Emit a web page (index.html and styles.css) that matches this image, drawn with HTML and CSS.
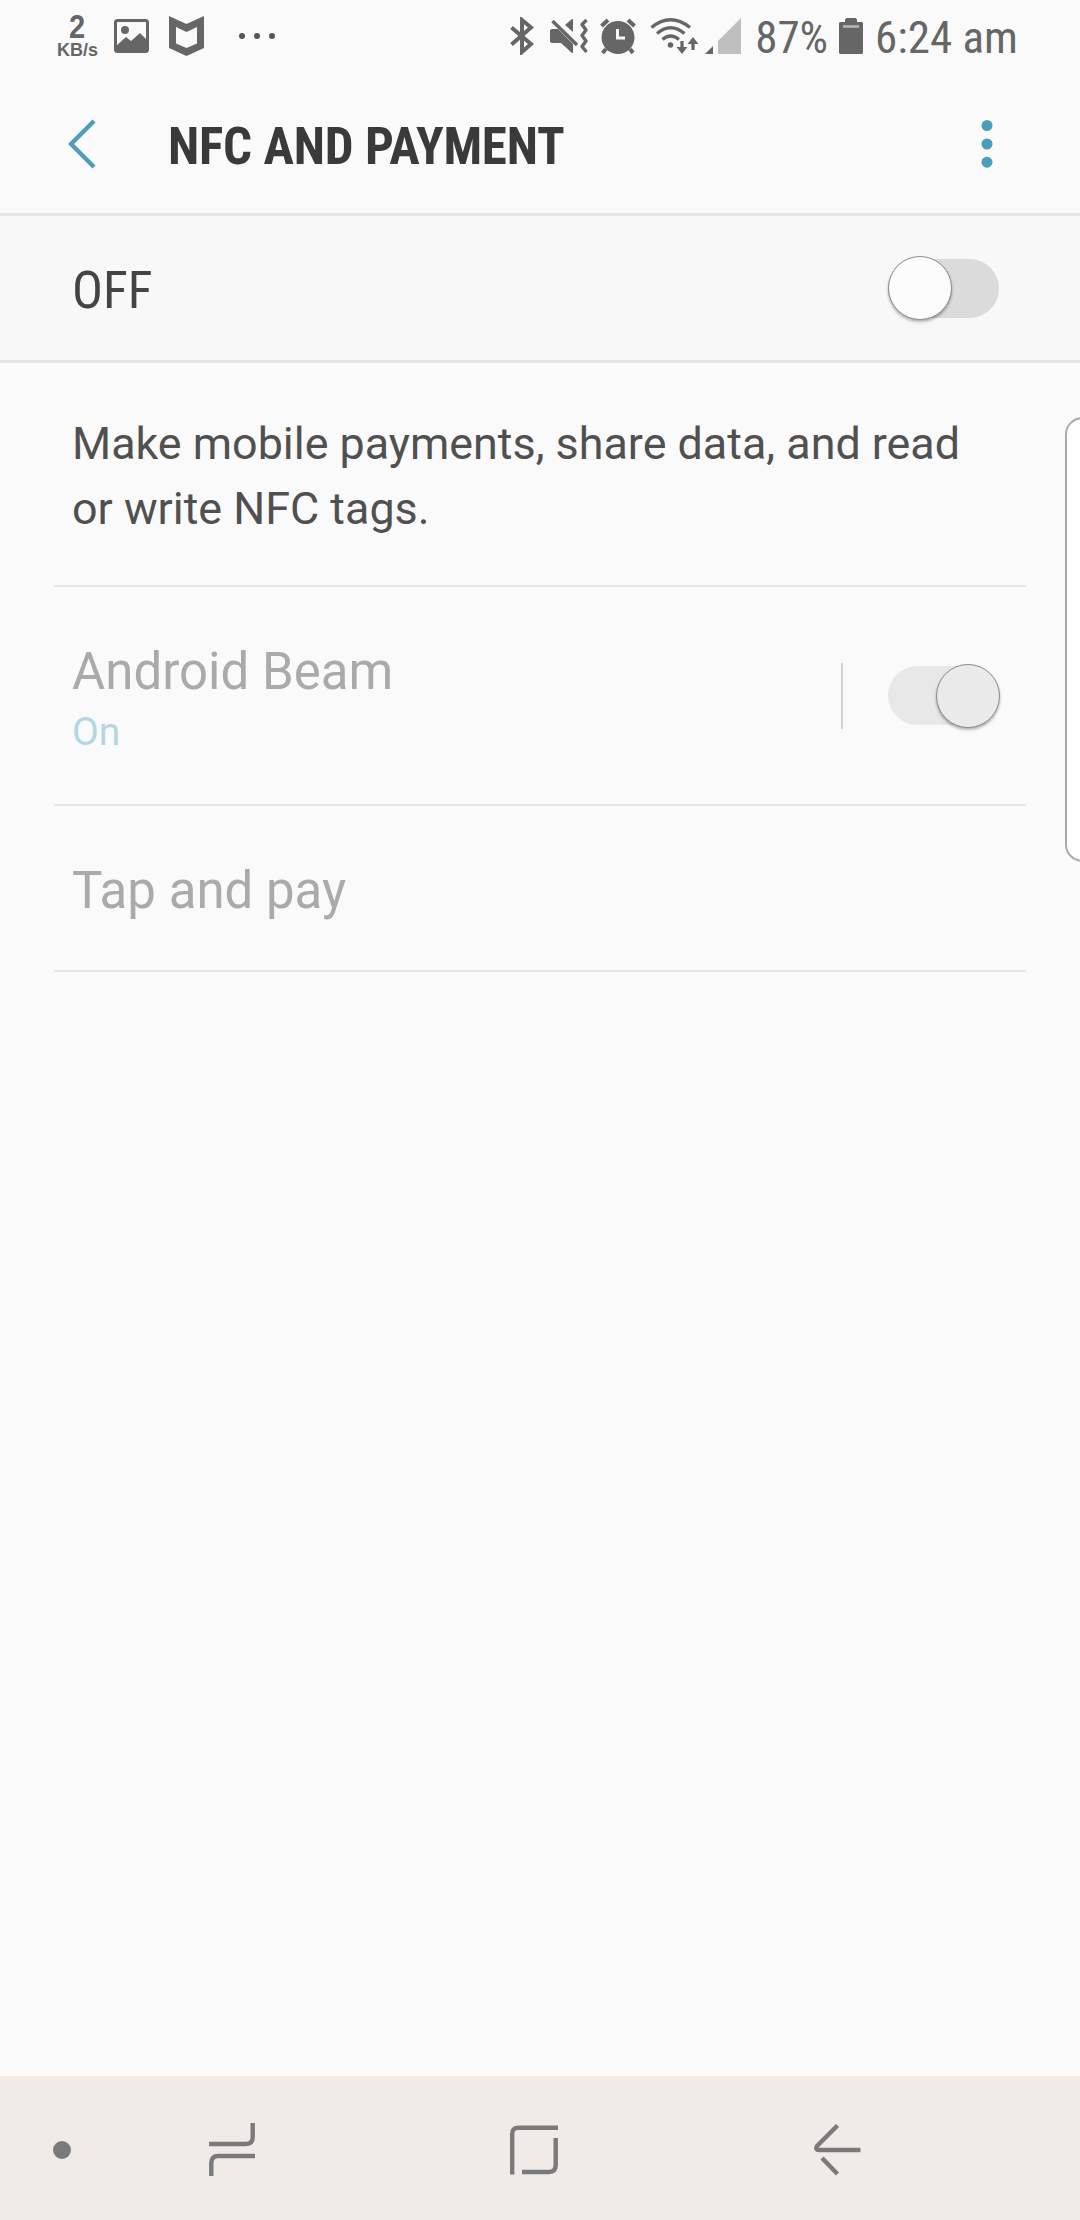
FILE: index.html
```html
<!DOCTYPE html>
<html lang="en">
<head>
    <meta charset="UTF-8">
    <meta name="viewport" content="width=device-width, initial-scale=1.0">
    <title>NFC and payment</title>
    <link rel="stylesheet" href="styles.css">
</head>
<body>
    <div class="screen">
        <div class="status-bar">
            <div class="status-left">
                <div class="speed"><span class="speed-num">2</span><span class="speed-unit">KB/s</span></div>
                <svg class="icon-picture" width="35" height="34" viewBox="0 0 35 34">
                    <rect x="1.5" y="1.5" width="32" height="31" rx="2" fill="none" stroke="#666" stroke-width="3"/>
                    <circle cx="11" cy="11" r="4" fill="#666"/>
                    <path d="M2 27 L12 18 L17 22 L26 14 L33 21 V32 H2 Z" fill="#666"/>
                </svg>
                <svg class="icon-shield" width="35" height="40" viewBox="0 0 35 40">
                    <path fill="#666" fill-rule="evenodd" d="M0 0 L17.5 8 L35 0 V32 L17.5 40 L0 32 Z M7 11 V27.5 L17.5 32 L28 27.5 V11 L17.5 16 Z"/>
                </svg>
                <svg class="icon-dots" width="36" height="6" viewBox="0 0 36 6">
                    <circle cx="3" cy="3" r="3"/><circle cx="18" cy="3" r="3"/><circle cx="33" cy="3" r="3"/>
                </svg>
            </div>
            <div class="status-right">
                <svg width="24" height="38" viewBox="0 0 24 38">
                    <path d="M1.5 10.5 L21 27 L12 35 V3 L21 10.5 L1.5 27.5" fill="none" stroke="#666" stroke-width="4"/>
                </svg>
                <svg class="icon-mute" width="39" height="38" viewBox="0 0 39 38">
                    <path d="M0 14 Q0 12 2 12 H8 L23 27 V36 H22 L11 26 H2 Q0 26 0 24 Z" fill="#666"/>
                    <path d="M15 8 L22 2 H23 V15 Z" fill="#666"/>
                    <path d="M2.5 4 L27 28" stroke="#666" stroke-width="3.4"/>
                    <path d="M36.5 2 L32 6.5 L36 12 L32 17.5 L36 23 L32 28.5 L36.5 34" transform="translate(0 1)" fill="none" stroke="#666" stroke-width="3.4" stroke-linejoin="round"/>
                </svg>
                <svg class="icon-alarm" width="36" height="37" viewBox="0 0 36 37">
                    <circle cx="18" cy="19.5" r="16.5" fill="#666"/>
                    <path d="M1.5 8 L8 2 M34.5 8 L28 2 M6 31 L2.5 35 M30 31 L33 35" stroke="#666" stroke-width="4"/>
                    <path d="M17.5 11 V20 H25" fill="none" stroke="#fafafa" stroke-width="3"/>
                </svg>
                <svg class="icon-wifi" width="49" height="37" viewBox="0 0 49 37">
                    <g fill="none" stroke="#666" stroke-width="3.2">
                        <path d="M1.5 9.5 Q20.5 -6 40 9.5"/>
                        <path d="M7 15.5 Q20.5 4 34.5 15.5"/>
                        <path d="M12.5 21.5 Q20.5 14.5 29 21.5"/>
                        <path d="M32 23 V33 M43 32 V22"/>
                    </g>
                    <circle cx="20.5" cy="27" r="2.8" fill="#666"/>
                    <path d="M26.5 29 H37.5 L32 36 Z M37.5 26 H48.5 L43 19 Z" fill="#666"/>
                </svg>
                <svg class="icon-signal" width="36" height="36" viewBox="0 0 36 36">
                    <path d="M8 28 V36 H0 Z" fill="#666"/>
                    <path d="M13 23 L36 0 V36 H13 Z" fill="#bfbfbf"/>
                </svg>
                <span class="battery-text">87%</span>
                <svg class="icon-battery" width="24" height="36" viewBox="0 0 24 36">
                    <path d="M1 4 H6 V1.5 L7.5 0 H16.5 L18 1.5 V4 H23 L24 5 V35 L23 36 H1 L0 35 V5 Z" fill="#666"/>
                    <path d="M4 8.5 H20" stroke="#b5b5b5" stroke-width="2.6"/>
                </svg>
                <span class="clock">6:24 am</span>
            </div>
        </div>

        <div class="header">
            <svg class="back" width="28" height="50" viewBox="0 0 28 50">
                <path d="M26 2 L3 25 L26 48" fill="none" stroke="#4a9dbb" stroke-width="4.4"/>
            </svg>
            <h1>NFC AND PAYMENT</h1>
            <svg class="more" width="12" height="50" viewBox="0 0 12 50">
                <circle cx="6" cy="6.5" r="5.5"/><circle cx="6" cy="25" r="5.5"/><circle cx="6" cy="43.2" r="5.5"/>
            </svg>
        </div>

        <div class="master">
            <span class="master-label">OFF</span>
            <div class="switch"><div class="knob"></div></div>
        </div>

        <p class="description">Make mobile payments, share data, and read or write NFC tags.</p>

        <div class="item item-beam">
            <div class="item-text">
                <div class="item-title">Android Beam</div>
                <div class="item-sub">On</div>
            </div>
            <div class="separator"></div>
            <div class="switch switch-on"><div class="knob"></div></div>
        </div>
        <div class="item item-pay">
            <div class="item-title">Tap and pay</div>
        </div>

        <div class="edge-panel"></div>

        <div class="nav-bar">
            <div class="nav-dot"></div>
            <svg class="nav-recents" width="46" height="54" viewBox="0 0 46 54">
                <path d="M0 21 H37 Q43.7 21 43.7 14 V0 M46 33 H9 Q2.3 33 2.3 40 V53"/>
            </svg>
            <svg class="nav-home" width="48" height="50" viewBox="0 0 48 50">
                <path d="M2.2 49.5 V9 Q2.2 2.7 8.5 2.7 H48 M12 47 H39 Q45.7 47 45.7 40 V13"/>
            </svg>
            <svg class="nav-back" width="47" height="54" viewBox="0 0 47 54">
                <path d="M23.5 2.5 L3 23 Q1 27 5 27 H46.5 M8 35 L23.5 51"/>
            </svg>
        </div>
    </div>
</body>
</html>
```

FILE: styles.css
```css
body {
    margin: 0;
    font-family: Roboto, sans-serif;
    background-color: #fafafa;
}

.screen {
    position: relative;
    display: flex;
    flex-direction: column;
    width: 1080px;
    height: 2220px;
    overflow: hidden;
}

svg {
    display: block;
    flex-shrink: 0;
}

.status-bar {
    display: flex;
    justify-content: space-between;
    height: 72px;
    padding: 0 62px 0 57px;
    color: #666;
}

.status-left, .status-right {
    display: flex;
    align-items: center;
}

.speed {
    display: flex;
    flex-direction: column;
    align-items: center;
    width: 41px;
    font-family: "Liberation Sans", sans-serif;
    font-weight: bold;
}

.speed-num {
    font-size: 33px;
    line-height: 28px;
    transform: scaleX(0.88);
}

.speed-unit {
    font-size: 18px;
    line-height: 18px;
}

.icon-picture {
    margin-left: 16px;
}

.icon-shield {
    margin-left: 20px;
}

.icon-dots {
    margin-left: 35px;
    fill: #555;
}

.icon-mute {
    margin-left: 16px;
}

.icon-alarm {
    margin-left: 11px;
}

.icon-wifi {
    margin-left: 14px;
}

.icon-signal {
    margin-left: 6px;
}

.battery-text, .clock, .master-label, h1 {
    font-family: "Roboto Condensed", Roboto, sans-serif;
    font-stretch: 75%;
    white-space: nowrap;
}

.battery-text, .clock {
    padding-top: 2px;
    font-size: 45px;
    line-height: 45px;
}

.battery-text {
    margin-left: 14px;
}

.icon-battery {
    margin-left: 11px;
}

.clock {
    margin-left: 12px;
}

.header {
    display: flex;
    align-items: center;
    height: 138px;
    padding: 3px 87px 0 68px;
    border-bottom: 3px solid #e6e6e6;
}

h1 {
    flex: 1;
    margin: 0;
    padding: 6px 0 0 72px;
    font-size: 51px;
    line-height: 60px;
    letter-spacing: -0.2px;
    color: #3a3a3a;
}

.more {
    fill: #4a9dbb;
}

.master {
    display: flex;
    align-items: center;
    justify-content: space-between;
    height: 144px;
    padding: 0 81px 0 72px;
    background-color: #f8f8f8;
    border-bottom: 3px solid #e4e4e4;
}

.master-label {
    padding-top: 6px;
    font-size: 51.5px;
    line-height: 60px;
    color: #444;
}

.switch {
    display: flex;
    box-sizing: border-box;
    width: 111px;
    height: 59px;
    border-radius: 30px;
    background-color: #dbdbdb;
    align-items: center;
}

.knob {
    box-sizing: border-box;
    flex-shrink: 0;
    width: 64px;
    height: 64px;
    border: 1px solid #8c8c8c;
    border-radius: 50%;
    background-color: #fcfcfc;
    box-shadow: 0 2px 3px rgba(0, 0, 0, 0.3);
}

.switch-on {
    justify-content: flex-end;
    background-color: #e8e8e8;
}

.switch-on .knob {
    margin-right: -1px;
    background-color: #eaeaea;
}

.description {
    height: 130px;
    margin: 0 54px;
    padding: 48px 40px 44px 18px;
    border-bottom: 2px solid #e5e5e5;
    font-size: 44.85px;
    line-height: 65px;
    color: #505050;
}

.item {
    display: flex;
    align-items: center;
    box-sizing: border-box;
    margin: 0 54px;
    border-bottom: 2px solid #e5e5e5;
}

.item-beam {
    height: 219px;
    padding-right: 27px;
}

.item-text {
    flex: 1;
    padding: 6px 0 0 18px;
}

.item-title {
    font-size: 51px;
    line-height: 60px;
    color: #aaa;
}

.item-sub {
    margin-top: 6px;
    font-size: 39px;
    line-height: 48px;
    color: #b4d6e0;
}

.separator {
    width: 2px;
    height: 66px;
    margin-right: 45px;
    background-color: #d2d2d2;
}

.item-pay {
    height: 166px;
    padding: 6px 0 0 18px;
}

/* handle of the edge panel, runs off the right side */
.edge-panel {
    position: absolute;
    top: 417px;
    right: -20px;
    box-sizing: border-box;
    width: 35px;
    height: 445px;
    border: 2px solid #aaa;
    border-radius: 20px;
    background-color: #fff;
}

.nav-bar {
    display: flex;
    align-items: center;
    height: 144px;
    margin-top: auto;
    padding: 0 53px;
    background-color: #f0ebe7;
}

.nav-bar svg {
    fill: none;
    stroke: #7a7a7a;
    stroke-width: 4.4;
}

.nav-dot {
    width: 18px;
    height: 18px;
    margin-top: 4px;
    border-radius: 50%;
    background-color: #7a7a7a;
}

.nav-recents {
    margin: 3px 0 0 138px;
}

.nav-home {
    margin: 4px 0 0 255px;
}

.nav-back {
    margin: 4px 0 0 256px;
}
```
